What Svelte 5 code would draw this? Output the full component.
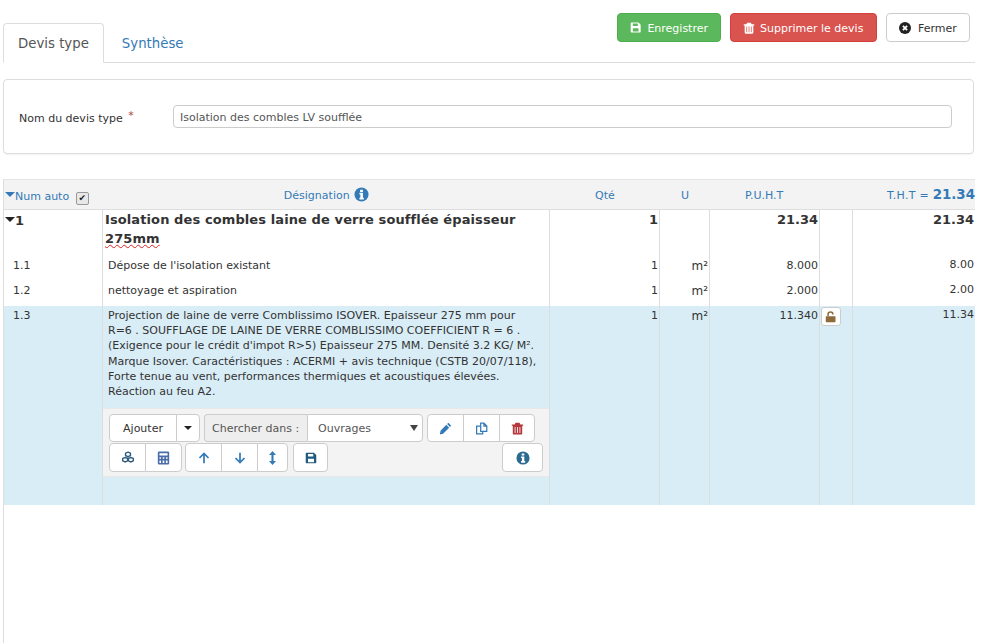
<script>
  const lines = [
    { num: "1.1", text: "Dépose de l'isolation existant", pu: "8.000", total: "8.00" },
    { num: "1.2", text: "nettoyage et aspiration", pu: "2.000", total: "2.00" }
  ];
</script>

{#snippet save(size)}
  <svg width={size} height={size} viewBox="0 0 16 16" aria-hidden="true">
    <path fill="currentColor" fill-rule="evenodd" d="M2 1h10l3 3v10a1 1 0 0 1-1 1H2a1 1 0 0 1-1-1V2a1 1 0 0 1 1-1Zm2 1.500V6h7V2.500H4Zm0 6.500v4.500h8V9H4Z" />
  </svg>
{/snippet}

{#snippet trash(size)}
  <svg width={size} height={size} viewBox="0 0 16 16" aria-hidden="true">
    <path fill="currentColor" fill-rule="evenodd" d="M5.500 1h5l1 2H15v1.500h-1.200V14a1.500 1.500 0 0 1-1.500 1.500H3.700A1.500 1.500 0 0 1 2.200 14V4.500H1V3h3.500l1-2ZM4.500 6v7.500h1V6h-1Zm3 0v7.500h1V6h-1Zm3 0v7.500h1V6h-1Z" />
  </svg>
{/snippet}

{#snippet info(size, color)}
  <svg width={size} height={size} viewBox="0 0 16 16" aria-hidden="true">
    <circle cx="8" cy="8" r="7.500" fill={color} />
    <path fill="#fff" d="M6.500 2.800h3v2.400h-3ZM5.800 6.200h3.700v5.200h1v1.900H5.800v-1.900h1V8.100h-1Z" />
  </svg>
{/snippet}

<div class="page">
  <div class="top">
    <nav class="tabs">
      <span class="tab active">Devis type</span>
      <span class="tab">Synthèse</span>
    </nav>
    <div class="actions">
      <button class="btn green">{@render save(13)}<span>Enregistrer</span></button>
      <button class="btn red">{@render trash(12)}<span>Supprimer le devis</span></button>
      <button class="btn plain">
        <svg width="12" height="12" viewBox="0 0 16 16" aria-hidden="true">
          <circle cx="8" cy="8" r="8" fill="#222" />
          <path d="m5.200 5.200 5.600 5.600m0-5.600-5.600 5.600" stroke="#fff" stroke-width="2.400" />
        </svg>
        <span>Fermer</span>
      </button>
    </div>
  </div>

  <section class="panel">
    <label for="nom">Nom du devis type <sup>*</sup></label>
    <input id="nom" value="Isolation des combles LV soufflée" />
  </section>

  <div class="sheet">
    <div class="row head">
      <div class="c1"><i class="caret blue"></i>Num auto <span class="check">✔</span></div>
      <div class="c2 center">Désignation {@render info(15, "#337ab7")}</div>
      <div class="c3 qte">Qté</div>
      <div class="c4 center">U</div>
      <div class="c5 puht">P.U.H.T</div>
      <div class="c6"></div>
      <div class="c7 right"><span class="tht">T.H.T =</span> <b>21.34</b></div>
    </div>

    <div class="row title">
      <div class="c1"><i class="caret"></i>1</div>
      <div class="c2">Isolation des combles laine de verre soufflée épaisseur <span class="typo">275mm</span></div>
      <div class="c3 right">1</div>
      <div class="c4"></div>
      <div class="c5 right">21.34</div>
      <div class="c6"></div>
      <div class="c7 right">21.34</div>
    </div>

    {#each lines as line (line.num)}
      <div class="row line">
        <div class="c1">{line.num}</div>
        <div class="c2">{line.text}</div>
        <div class="c3 right">1</div>
        <div class="c4 right">m²</div>
        <div class="c5 right">{line.pu}</div>
        <div class="c6"></div>
        <div class="c7 right up">{line.total}</div>
      </div>
    {/each}

    <div class="row line selected">
      <div class="c1">1.3</div>
      <div class="c2 body">
        <p>Projection de laine de verre Comblissimo ISOVER. Epaisseur 275 mm pour R=6 . SOUFFLAGE DE LAINE DE VERRE COMBLISSIMO COEFFICIENT R = 6 . (Exigence pour le crédit d'impot R&gt;5) Epaisseur 275 MM. Densité 3.2 KG/ M². Marque Isover. Caractéristiques : ACERMI + avis technique (CSTB 20/07/118), Forte tenue au vent, performances thermiques et acoustiques élevées. Réaction au feu A2.</p>
        <div class="toolbar">
          <div class="tool-row">
            <div class="group">
              <button class="tb text ajouter">Ajouter</button>
              <button class="tb drop" aria-label="Plus"><i class="caret small"></i></button>
            </div>
            <div class="group search">
              <span class="addon">Chercher dans :</span>
              <span class="select">Ouvrages<i class="caret select-caret"></i></span>
            </div>
            <div class="group">
              <button class="tb icon" aria-label="Modifier">
                <svg width="13" height="13" viewBox="0 0 16 16" aria-hidden="true"><path fill="#337ab7" d="M11.500 1 15 4.500l-1.500 1.500L10 2.500ZM9 3.500 12.500 7 5 14.500l-4 1 .9-4.600Z" /></svg>
              </button>
              <button class="tb icon" aria-label="Dupliquer">
                <svg width="13" height="13" viewBox="0 0 16 16" aria-hidden="true"><path fill="none" stroke="#337ab7" stroke-width="1.500" d="M7 1.500h4l3.500 3.500v6.500H7ZM11 1.500V5h3.500M7 5H2v9.500h7.500v-3" /></svg>
              </button>
              <button class="tb icon reddish" aria-label="Supprimer">{@render trash(13)}</button>
            </div>
          </div>
          <div class="tool-row">
            <div class="group">
              <button class="tb icon" aria-label="Ouvrages">
                <svg width="14" height="13" viewBox="0 0 16 16" aria-hidden="true"><path fill="none" stroke="#2c5a7c" stroke-width="1.700" d="M8 1.500l3 1.200v3L8 7 5 5.700v-3ZM4.500 8l3 1.200v3l-3 1.300-3-1.300v-3ZM11.500 8l3 1.200v3l-3 1.300-3-1.300v-3Z" /></svg>
              </button>
              <button class="tb icon" aria-label="Calculer">
                <svg width="13" height="14" viewBox="0 0 16 16" aria-hidden="true"><path fill="#4a6da7" fill-rule="evenodd" d="M2.500 0h11A1.500 1.500 0 0 1 15 1.500v13a1.500 1.500 0 0 1-1.500 1.500h-11A1.500 1.500 0 0 1 1 14.500v-13A1.500 1.500 0 0 1 2.500 0ZM3 2v3h10V2H3Zm0 5v2h2V7H3Zm4 0v2h2V7H7Zm4 0v2h2V7h-2Zm-8 4v3h2v-3H3Zm4 0v3h2v-3H7Zm4 0v3h2v-3h-2Z" /></svg>
              </button>
            </div>
            <div class="group moves">
              <button class="tb icon" aria-label="Monter">
                <svg width="12" height="12" viewBox="0 0 16 16" aria-hidden="true"><path fill="none" stroke="#337ab7" stroke-width="2.300" d="M8 15V2.500M2 8l6-6 6 6" /></svg>
              </button>
              <button class="tb icon" aria-label="Descendre">
                <svg width="12" height="12" viewBox="0 0 16 16" aria-hidden="true"><path fill="none" stroke="#337ab7" stroke-width="2.300" d="M8 1v12.500M2 8l6 6 6-6" /></svg>
              </button>
              <button class="tb icon narrow" aria-label="Déplacer">
                <svg width="9" height="14" viewBox="0 0 9 16" aria-hidden="true"><path fill="#337ab7" d="M4.500 0 8.500 4.500H5.700v7h2.800L4.500 16 .5 11.500h2.800v-7H.5Z" /></svg>
              </button>
            </div>
            <button class="tb icon solo dark" aria-label="Enregistrer">{@render save(12)}</button>
            <button class="tb icon info-btn" aria-label="Informations">{@render info(14, "#2c6a91")}</button>
          </div>
        </div>
      </div>
      <div class="c3 right">1</div>
      <div class="c4 right">m²</div>
      <div class="c5 right">11.340</div>
      <div class="c6 lock-cell">
        <button class="lock" aria-label="Déverrouiller">
          <svg width="12" height="12" viewBox="0 0 16 16" aria-hidden="true"><path fill="#8f6b3c" d="M2 7h11a1 1 0 0 1 1 1v6a1 1 0 0 1-1 1H2a1 1 0 0 1-1-1V8a1 1 0 0 1 1-1Z" /><path fill="none" stroke="#8f6b3c" stroke-width="2" d="M4 7V4.500a3.300 3.300 0 0 1 6.600 0" /></svg>
        </button>
      </div>
      <div class="c7 right up">11.34</div>
    </div>
  </div>
</div>

<style>
  :global(body) {
    margin: 0;
    background: #fff;
  }
  .page {
    width: 985px;
    height: 643px;
    overflow: hidden;
    box-sizing: border-box;
    padding-left: 3px;
    font-family: "DejaVu Sans", Verdana, sans-serif;
    font-size: 11px;
    color: #333;
  }
  button {
    font-family: inherit;
    cursor: pointer;
  }
  .top {
    position: relative;
    width: 972px;
    height: 63px;
    box-sizing: border-box;
    padding-top: 23px;
    border-bottom: 1px solid #ddd;
  }
  .tabs {
    display: flex;
    height: 40px;
  }
  .tab {
    padding: 13px 15px 0;
    font-size: 13.300px;
    color: #337ab7;
  }
  .tab.active {
    height: 40px;
    box-sizing: border-box;
    border: 1px solid #ddd;
    border-bottom-color: #fff;
    border-radius: 4px 4px 0 0;
    color: #555;
    background: #fff;
    padding: 12px 14px 0;
    margin-right: 3px;
  }
  .actions {
    position: absolute;
    top: 13px;
    left: 614px;
    display: flex;
    gap: 9px;
  }
  .btn {
    display: flex;
    align-items: center;
    gap: 6px;
    height: 29px;
    padding: 0 12px;
    box-sizing: border-box;
    border: 1px solid;
    border-radius: 4px;
    font-size: 11px;
    white-space: nowrap;
  }
  .btn span {
    padding-top: 1px;
  }
  .green {
    width: 104px;
    background: #5cb85c;
    border-color: #4cae4c;
    color: #fff;
  }
  .red {
    width: 147px;
    gap: 5px;
    background: #d9534f;
    border-color: #d43f3a;
    color: #fff;
  }
  .plain {
    width: 84px;
    gap: 7px;
    background: #fff;
    border-color: #ccc;
    color: #333;
  }
  .panel {
    display: flex;
    align-items: center;
    width: 971px;
    height: 75px;
    box-sizing: border-box;
    margin-top: 16px;
    padding: 0 21px 0 15px;
    border: 1px solid #ddd;
    border-radius: 4px;
    box-shadow: 0 1px 1px rgba(0, 0, 0, 0.05);
  }
  label {
    width: 154px;
    flex: none;
    margin-top: 4px;
    color: #333;
  }
  sup {
    color: #a94442;
    font-size: 11px;
    line-height: 0;
    vertical-align: 3px;
    margin-left: 2px;
  }
  input {
    flex: 1;
    height: 23px;
    box-sizing: border-box;
    padding: 1px 6px 0;
    border: 1px solid #ccc;
    border-radius: 4px;
    font: inherit;
    color: #555;
    outline: 0;
  }
  .sheet {
    position: relative;
    width: 972px;
    box-sizing: border-box;
    margin-top: 25px;
    min-height: 470px;
    border-left: 1px solid #ddd;
  }
  .row {
    display: grid;
    grid-template-columns: 99px 447px 110px 50px 110px 33px 122px;
  }
  .row > div {
    box-sizing: border-box;
    padding: 3px 1px;
    border-right: 1px solid #ddd;
    min-width: 0;
    white-space: nowrap;
  }
  .row > .c7 {
    border-right: 0;
    overflow: hidden;
  }
  .right {
    text-align: right;
  }
  .center {
    text-align: center;
  }
  .head {
    height: 31px;
    box-sizing: border-box;
    background: #f3f3f3;
    border-top: 1px solid #e5e5e5;
    border-bottom: 1px solid #ddd;
    color: #337ab7;
  }
  .head > div {
    border-right: 0;
    padding: 9px 0 0;
  }
  .row.head > .c1 {
    padding: 10px 0 0 1px;
  }
  .row.head > .c2 {
    padding-top: 7px;
  }
  .head .c2 svg {
    vertical-align: -3px;
    margin-left: 1px;
  }
  .row.head > .qte {
    padding-left: 45px;
  }
  .row.head > .puht {
    padding-left: 35px;
  }
  .row.head > .c7 {
    padding-top: 7px;
  }
  .tht {
    letter-spacing: 0.3px;
  }
  .head b {
    font-size: 13.400px;
  }
  .check {
    display: inline-flex;
    align-items: center;
    justify-content: center;
    width: 11px;
    height: 11px;
    margin-left: 3px;
    vertical-align: -1px;
    border: 1px solid #999;
    border-radius: 2px;
    background: #e8e8e8;
    color: #222;
    font-size: 9px;
    line-height: 1;
  }
  .caret {
    display: inline-block;
    width: 0;
    height: 0;
    vertical-align: 3px;
    border-style: solid;
    border-width: 5px 5px 0;
    border-color: #222 transparent transparent;
  }
  .caret.blue {
    border-top-color: #337ab7;
  }
  .caret.small {
    border-width: 4px 4px 0;
    vertical-align: 1px;
  }
  .title {
    height: 44px;
    font-size: 13px;
    font-weight: 700;
    line-height: 19px;
  }
  .row.title > div {
    padding: 0 1px;
    white-space: normal;
  }
  .title .c1 {
    line-height: 22px;
  }
  .row.title > .c2 {
    padding-left: 2px;
    padding-top: 1px;
    line-height: 18.500px;
    letter-spacing: 0.1px;
  }
  .title .c3 {
    line-height: 20px;
  }
  .typo {
    text-decoration: underline wavy #d22;
    text-decoration-thickness: 1px;
    text-underline-offset: 1px;
  }
  .line {
    height: 25px;
  }
  .row.line:nth-child(4) {
    height: 27px;
  }
  .row.line > div {
    padding-top: 5px;
  }
  .row.line > .c1 {
    padding-left: 9px;
  }
  .row.line > .c2 {
    padding-left: 5px;
  }
  .row.line > .c4 {
    font-size: 12px;
    padding-top: 5px;
  }
  .row.line > .up {
    padding-top: 4px;
  }
  .selected {
    height: 199px;
    background: #d9edf7;
  }
  .row.selected > div {
    padding-top: 3px;
  }
  .row.selected > .c1 {
    padding-top: 3px;
  }
  .row.selected > .c2 {
    padding: 0;
    white-space: normal;
  }
  .row.selected > .up {
    padding-top: 2px;
  }
  .row.selected > .c4 {
    padding-top: 3px;
  }
  .body p {
    margin: 0;
    padding: 2px 12px 0 5px;
    line-height: 15.200px;
    height: 102px;
    box-sizing: border-box;
  }
  .toolbar {
    display: flex;
    flex-direction: column;
    gap: 1px;
    height: 69px;
    box-sizing: border-box;
    padding: 5px 6px 0;
    background: #f3f3f3;
    border-top: 1px solid #e8e8e8;
    border-bottom: 1px solid #e8e8e8;
  }
  .tool-row {
    display: flex;
    gap: 4px;
  }
  .group {
    display: flex;
  }
  .moves {
    margin-left: -1px;
    margin-right: 1px;
  }
  .tb {
    height: 28px;
    box-sizing: border-box;
    padding: 0;
    border: 1px solid #ccc;
    background: #fff;
    color: #333;
    font-size: 11px;
    display: flex;
    align-items: center;
    justify-content: center;
  }
  .group .tb + .tb {
    margin-left: -1px;
  }
  .group .tb:first-child {
    border-radius: 4px 0 0 4px;
  }
  .group .tb:last-child {
    border-radius: 0 4px 4px 0;
  }
  .tool-row:last-child .tb {
    height: 29px;
  }
  .ajouter {
    width: 68px;
  }
  .drop {
    width: 24px;
  }
  .icon {
    width: 37px;
  }
  .narrow {
    width: 31px;
  }
  .addon {
    display: flex;
    align-items: center;
    width: 103px;
    height: 28px;
    box-sizing: border-box;
    padding-left: 7px;
    border: 1px solid #ccc;
    border-right: 0;
    border-radius: 4px 0 0 4px;
    background: #eee;
    color: #555;
  }
  .select {
    position: relative;
    display: flex;
    align-items: center;
    width: 116px;
    height: 28px;
    box-sizing: border-box;
    padding-left: 10px;
    border: 1px solid #ccc;
    border-radius: 0 4px 4px 0;
    background: #fff;
    color: #555;
  }
  .select-caret {
    position: absolute;
    right: 4px;
    top: 10px;
    border-width: 6px 4px 0;
    border-top-color: #444;
  }
  .reddish {
    color: #b5383d;
    width: 36px;
  }
  .solo {
    width: 35px;
    border-radius: 4px;
  }
  .dark {
    color: #1f5a80;
  }
  .info-btn {
    width: 41px;
    border-radius: 4px;
    margin-left: auto;
  }
  .row.selected > .lock-cell {
    padding: 1px 0 0 1px;
  }
  .lock {
    display: flex;
    align-items: center;
    justify-content: center;
    width: 20px;
    height: 19px;
    padding: 0;
    border: 1px solid #ccc;
    border-radius: 3px;
    background: #fff;
  }
</style>
